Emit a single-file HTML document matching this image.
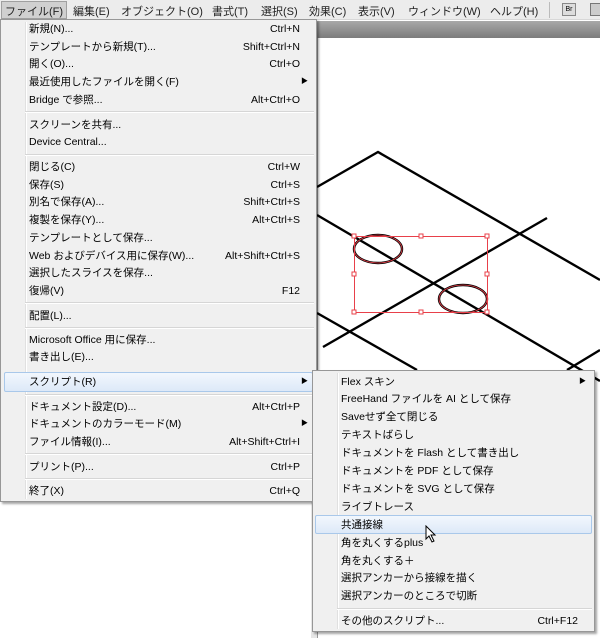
<!DOCTYPE html>
<html><head><meta charset="utf-8"><style>
*{margin:0;padding:0;box-sizing:border-box}
body{width:600px;height:633px;overflow:hidden;background:#fff;position:relative;font-family:"Liberation Sans","Noto Sans CJK JP",sans-serif;font-size:10.5px;color:#000}
.abs{position:absolute}
#bar{left:0;top:0;width:600px;height:20px;background:#ececec;border-bottom:1px solid #d8d8d8}
#bar span{position:absolute;top:3px;font-size:11px;color:#222;white-space:nowrap}
#tab{left:300px;top:21px;width:300px;height:17px;background:linear-gradient(#a8a8a8,#7c7c7c)}
#strip{left:311px;top:38px;width:7px;height:600px;background:#e6e6e6;border-right:1px solid #999}
.menu{background:#f0f0f0;border:1px solid #979797;box-shadow:2px 2px 2px rgba(0,0,0,.35)}
.it{position:absolute;left:0;right:0;height:18px;line-height:18px;white-space:nowrap}
.it .t{position:absolute;left:28px}
.it .k{position:absolute;right:16px}
.it .a{position:absolute;right:8px;font-size:7px}
.sep{position:absolute;left:24px;right:2px;height:2px;border-top:1px solid #d6d6d6;border-bottom:1px solid #fff}
.gut{position:absolute;left:24px;top:2px;bottom:2px;width:2px;border-left:1px solid #e0e0e0;border-right:1px solid #fff}
.hl{position:absolute;background:linear-gradient(#f2f7fd,#dde9f8);border:1px solid #a9c8ea;border-radius:2px}
</style></head><body>
<div id="bar" class="abs">
<div class="abs" style="left:1px;top:1px;width:66px;height:18px;background:#d0d0d0;border:1px solid #a0a0a0"></div>
<span style="left:5px">ファイル(F)</span><span style="left:73px">編集(E)</span><span style="left:121px">オブジェクト(O)</span><span style="left:212px">書式(T)</span><span style="left:261px">選択(S)</span><span style="left:309px">効果(C)</span><span style="left:358px">表示(V)</span><span style="left:408px">ウィンドウ(W)</span><span style="left:490px">ヘルプ(H)</span>
<div class="abs" style="left:549px;top:2px;width:1px;height:16px;background:#bbb"></div>
<div class="abs" style="left:562px;top:3px;width:14px;height:13px;background:#ddd;border:1px solid #888;font-size:7px;line-height:11px;text-align:center">Br</div>
<div class="abs" style="left:590px;top:3px;width:12px;height:13px;background:#ccc;border:1px solid #777"></div>
</div>
<div id="tab" class="abs"></div>
<div id="strip" class="abs"></div>
<svg class="abs" style="left:0;top:0" width="600" height="633">
<g stroke="#000" stroke-width="2.4" fill="none">
<polyline points="317,187 378,152 600,280"/>
<line x1="317" y1="215" x2="600" y2="381"/>
<line x1="323" y1="347" x2="547" y2="218"/>
<line x1="317" y1="313" x2="417" y2="370"/>
<line x1="567" y1="370" x2="600" y2="350"/>
<ellipse cx="378" cy="249" rx="24" ry="14"/>
<ellipse cx="463" cy="299" rx="24" ry="14"/>
</g>
<g stroke="#e8404a" fill="none" stroke-width="0.8">
<ellipse cx="378" cy="249" rx="24" ry="14"/>
<ellipse cx="463" cy="299" rx="24" ry="14"/>
</g>
<g stroke="#e8404a" fill="#fff" stroke-width="1">
<rect x="354.5" y="236.5" width="133" height="76" fill="none"/>
<rect x="352" y="234" width="4" height="4"/><rect x="419" y="234" width="4" height="4"/><rect x="485" y="234" width="4" height="4"/>
<rect x="352" y="272" width="4" height="4"/><rect x="485" y="272" width="4" height="4"/>
<rect x="352" y="310" width="4" height="4"/><rect x="419" y="310" width="4" height="4"/><rect x="485" y="310" width="4" height="4"/>
</g>
</svg>

<div class="menu abs" style="left:0;top:19px;width:317px;height:483px">
<div class="gut"></div>
<div class="hl" style="left:3px;right:3px;top:352px;height:20px"></div>
<div class="it" style="top:0"><span class="t">新規(N)...</span><span class="k">Ctrl+N</span></div>
<div class="it" style="top:18px"><span class="t">テンプレートから新規(T)...</span><span class="k">Shift+Ctrl+N</span></div>
<div class="it" style="top:35px"><span class="t">開く(O)...</span><span class="k">Ctrl+O</span></div>
<div class="it" style="top:53px"><span class="t">最近使用したファイルを開く(F)</span><span class="a">▶</span></div>
<div class="it" style="top:71px"><span class="t">Bridge で参照...</span><span class="k">Alt+Ctrl+O</span></div>
<div class="sep" style="top:91px"></div>
<div class="it" style="top:96px"><span class="t">スクリーンを共有...</span></div>
<div class="it" style="top:113px"><span class="t">Device Central...</span></div>
<div class="sep" style="top:134px"></div>
<div class="it" style="top:138px"><span class="t">閉じる(C)</span><span class="k">Ctrl+W</span></div>
<div class="it" style="top:156px"><span class="t">保存(S)</span><span class="k">Ctrl+S</span></div>
<div class="it" style="top:173px"><span class="t">別名で保存(A)...</span><span class="k">Shift+Ctrl+S</span></div>
<div class="it" style="top:191px"><span class="t">複製を保存(Y)...</span><span class="k">Alt+Ctrl+S</span></div>
<div class="it" style="top:209px"><span class="t">テンプレートとして保存...</span></div>
<div class="it" style="top:227px"><span class="t">Web およびデバイス用に保存(W)...</span><span class="k">Alt+Shift+Ctrl+S</span></div>
<div class="it" style="top:244px"><span class="t">選択したスライスを保存...</span></div>
<div class="it" style="top:262px"><span class="t">復帰(V)</span><span class="k">F12</span></div>
<div class="sep" style="top:282px"></div>
<div class="it" style="top:287px"><span class="t">配置(L)...</span></div>
<div class="sep" style="top:307px"></div>
<div class="it" style="top:311px"><span class="t">Microsoft Office 用に保存...</span></div>
<div class="it" style="top:328px"><span class="t">書き出し(E)...</span></div>
<div class="it" style="top:353px"><span class="t">スクリプト(R)</span><span class="a">▶</span></div>
<div class="sep" style="top:374px"></div>
<div class="it" style="top:378px"><span class="t">ドキュメント設定(D)...</span><span class="k">Alt+Ctrl+P</span></div>
<div class="it" style="top:395px"><span class="t">ドキュメントのカラーモード(M)</span><span class="a">▶</span></div>
<div class="it" style="top:413px"><span class="t">ファイル情報(I)...</span><span class="k">Alt+Shift+Ctrl+I</span></div>
<div class="sep" style="top:433px"></div>
<div class="it" style="top:438px"><span class="t">プリント(P)...</span><span class="k">Ctrl+P</span></div>
<div class="sep" style="top:458px"></div>
<div class="it" style="top:462px"><span class="t">終了(X)</span><span class="k">Ctrl+Q</span></div>
</div>

<div class="menu abs" style="left:312px;top:370px;width:283px;height:262px">
<div class="gut"></div>
<div class="hl" style="left:2px;right:2px;top:144px;height:19px"></div>
<div class="it" style="top:2px"><span class="t">Flex スキン</span><span class="a">▶</span></div>
<div class="it" style="top:19px"><span class="t">FreeHand ファイルを AI として保存</span></div>
<div class="it" style="top:37px"><span class="t">Saveせず全て閉じる</span></div>
<div class="it" style="top:55px"><span class="t">テキストばらし</span></div>
<div class="it" style="top:73px"><span class="t">ドキュメントを Flash として書き出し</span></div>
<div class="it" style="top:91px"><span class="t">ドキュメントを PDF として保存</span></div>
<div class="it" style="top:109px"><span class="t">ドキュメントを SVG として保存</span></div>
<div class="it" style="top:127px"><span class="t">ライブトレース</span></div>
<div class="it" style="top:145px"><span class="t">共通接線</span></div>
<div class="it" style="top:163px"><span class="t">角を丸くするplus</span></div>
<div class="it" style="top:181px"><span class="t">角を丸くする＋</span></div>
<div class="it" style="top:198px"><span class="t">選択アンカーから接線を描く</span></div>
<div class="it" style="top:216px"><span class="t">選択アンカーのところで切断</span></div>
<div class="sep" style="top:237px"></div>
<div class="it" style="top:241px"><span class="t">その他のスクリプト...</span><span class="k">Ctrl+F12</span></div>
</div>
<svg class="abs" style="left:425px;top:525px" width="12" height="18"><path d="M1 1 L1 14 L4 11 L7 17 L9 16 L6 10 L10 10 Z" fill="#fff" stroke="#000" stroke-width="1"/></svg>
</body></html>
